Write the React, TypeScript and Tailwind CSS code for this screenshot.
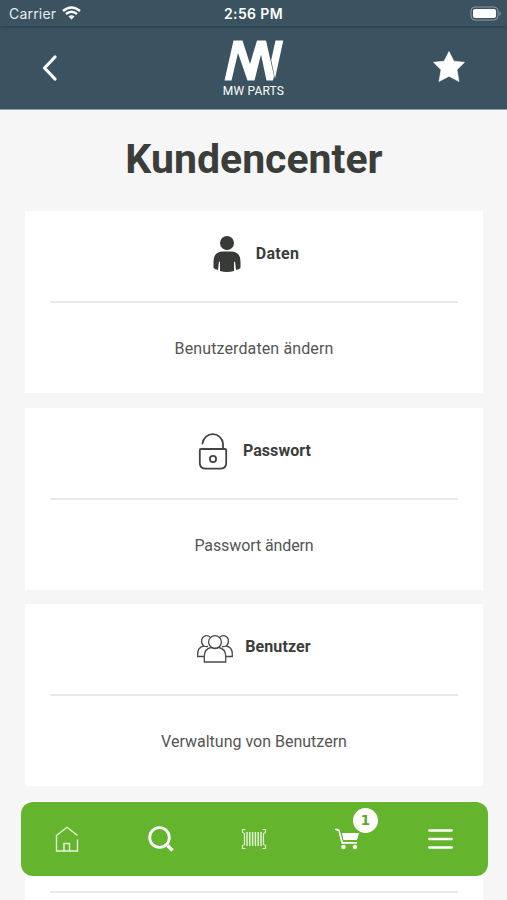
import type { ReactNode } from "react";

interface CardProps {
  title?: string;
  text?: string;
  icon?: ReactNode;
  titleClass?: string;
  textClass?: string;
}

function Card({ title, text, icon, titleClass = "", textClass = "" }: CardProps) {
  return (
    <section className="h-[182px] shrink-0 bg-white px-[25px]">
      <div className="flex h-[92px] items-center justify-center border-b-2 border-[#e9e9e9] pb-[4px]">
        {icon}
        <h2 className={`text-base font-bold whitespace-nowrap ${titleClass}`}>{title}</h2>
      </div>
      <p className={`pt-[34px] text-center text-base leading-6 text-[#555] ${textClass}`}>{text}</p>
    </section>
  );
}

function PersonIcon() {
  return (
    <svg className="mr-[15px] ml-[4px] h-[38px] w-[28px]" viewBox="0 0 28 38" fill="#383a38">
      <circle cx="14" cy="8" r="7" />
      <path d="M.5 29.500V27Q.5 16.500 10 16.500H18Q27.500 16.500 27.500 27V33Q26 34.500 23 35L22 26.500L21 27V36Q14 38 7 36V27L6 26.500L5 35Q2 34.500 .5 33Z" />
    </svg>
  );
}

function LockIcon() {
  return (
    <svg className="mr-[15px] ml-[1px] h-[38px] w-[30px]" viewBox="0 0 30 38" fill="none" stroke="#444" strokeWidth="1.800" strokeLinecap="round">
      <path d="M4.500 11.500A10.300 10.300 0 0 1 25 11.500V17" />
      <path d="M3 17H27Q28.200 17 28.200 18.200V31Q28.200 36.700 22 36.700H8Q1.800 36.700 1.800 31V18.200Q1.800 17 3 17Z" />
      <circle cx="15" cy="27" r="3.100" />
    </svg>
  );
}

function UsersIcon() {
  return (
    <svg className="mt-[4px] mr-[12px] h-[30px] w-[36px]" viewBox="0 0 36 30" fill="none" stroke="#4a4a4a" strokeWidth="1.300">
      <circle cx="18" cy="8" r="6.400" />
      <path d="M7.300 28V22Q7.300 15 14 13.500Q18 15.500 22 13.500Q28.700 15 28.700 22V28Z" />
      <path d="M13 3A5 5 0 0 0 4.700 5.500Q4 9.500 7 12Q.7 13 .7 20V22.500H7M23 3A5 5 0 0 1 31.300 5.500Q32 9.500 29 12Q35.300 13 35.300 20V22.500H29M7 12Q9 13 11 12.500M29 12Q27 13 25 12.500" />
    </svg>
  );
}

function Header() {
  return (
    <header className="h-[110px] border-b border-[#91a0a9] bg-[#3b5360] text-white">
      <div className="grid h-[26px] grid-cols-3 items-center shadow-[0_1px_3px_#263d4a]">
        <div className="flex items-center gap-[6px] pt-px pl-[9px] font-['Inter',sans-serif] text-[14px] tracking-[.2px] text-[#e6ebed]">
          Carrier
          <svg className="mb-[2px] h-[14px] w-[19px]" viewBox="0 0 19 14" fill="none" stroke="#fff" strokeWidth="2.500">
            <path d="M1 5Q9.500-2 18 5M4 8Q9.500 3.500 15 8" />
            <path d="M6.500 10.500Q9.500 8 12.500 10.500L9.500 13.500Z" fill="#fff" stroke="none" />
          </svg>
        </div>
        <time className="pt-px text-center font-['Inter',sans-serif] text-[14px] font-semibold tracking-[.4px] whitespace-nowrap">2:56 PM</time>
        <div className="flex justify-end pr-[6px]">
          <svg className="h-[15px] w-[31px]" viewBox="0 0 31 15">
            <rect x="1" y="1" width="27" height="13" rx="4" fill="none" stroke="#8d9ba3" />
            <rect x="3" y="3" width="23" height="9" rx="2" fill="#fff" />
            <path d="M29.500 5Q32 7.500 29.500 10Z" fill="#8d9ba3" />
          </svg>
        </div>
      </div>
      <div className="grid h-[83px] grid-cols-[1fr_66px_1fr]">
        <button className="flex items-center pl-[42px]" aria-label="Zurück">
          <svg className="h-[28px] w-[16px]" viewBox="0 0 16 28" fill="none" stroke="white" strokeWidth="3.200" strokeLinecap="round" strokeLinejoin="round">
            <path d="M13 3L2.500 14L13 25" />
          </svg>
        </button>
        <div className="flex flex-col items-center pt-[14px]">
          <svg className="h-[41px] w-[60px]" viewBox="0 0 60 41" fill="white">
            <path d="M.5 40.500L9.500 .5H18.500L26 24L33 .5H42L50 36L49 40.500H42.500L37 14.500L30.500 40.500H23.500L14 13L7.500 40.500Z" />
            <path d="M47.200 20L51.500 .5H59.300L51 38.500Z" />
          </svg>
          <span className="mt-[2px] font-['Roboto',sans-serif] text-[12px] leading-4 tracking-[.2px] whitespace-nowrap">MW PARTS</span>
        </div>
        <button className="flex items-center justify-end pr-[42px]" aria-label="Favoriten">
          <svg className="mb-[2px] h-[31px] w-[32px]" viewBox="0 0 32 31" fill="white" stroke="white" strokeWidth=".6" strokeLinejoin="round">
            <path d="M16 .5L20.900 10.200L31.500 11.300L24 18.700L26 30.500L16 25.300L6 30.500L8 18.700L.5 11.300L11.100 10.200Z" />
          </svg>
        </button>
      </div>
    </header>
  );
}

function BottomNav() {
  return (
    <nav className="absolute top-[802px] left-[20.500px] grid h-[74px] w-[467px] grid-cols-5 place-items-center rounded-[12px] bg-[#64b42d] text-white">
      <svg className="h-[26px] w-[24px]" viewBox="0 0 24 26" fill="none" stroke="#e8f5dd" strokeWidth="1.400">
        <path d="M22.500 13.500V25H1.500V9.500L12 1.300L22.500 9.500M9 25V17.500H14.500V25" />
      </svg>
      <svg className="h-[26px] w-[26px]" viewBox="0 0 26 26" fill="none" stroke="white" strokeWidth="2.800">
        <circle cx="11.500" cy="11.500" r="9.800" />
        <path d="M19.500 19.500L24.500 24.500" strokeWidth="3.500" />
      </svg>
      <svg className="h-[22px] w-[26px]" viewBox="0 0 26 22" fill="none" stroke="#dff1d1">
        <path d="M4.500 1.500H1.500V4.500L3.500 5.500V16.500L1.500 17.500V20.500H4.500M21.500 1.500H24.500V4.500L22.500 5.500V16.500L24.500 17.500V20.500H21.500" strokeWidth="1.200" />
        <path d="M6 4V18M8.800 4V18M11.600 4V18M14.400 4V18M17.200 4V18M20 4V18" strokeWidth="1.500" />
      </svg>
      <div className="relative">
        <svg className="h-[22px] w-[25px]" viewBox="0 0 25 22" fill="white">
          <path d="M0 1.200Q.3 .5 1 .6L4.500 1.500L8 14H22V15.800H6.500L3.300 3.200L0 2ZM7 5H24L22 12H8.500Z" />
          <circle cx="8.500" cy="19" r="2.200" />
          <circle cx="20" cy="19" r="2.200" />
        </svg>
        <span className="absolute -top-[20px] left-[18px] flex size-[25px] items-center justify-center rounded-full bg-white font-['DejaVu_Sans',sans-serif] text-[14px] font-bold text-[#64a72e]">1</span>
      </div>
      <svg className="h-[20px] w-[25px]" viewBox="0 0 25 20" stroke="white" strokeWidth="2.300" strokeLinecap="round">
        <path d="M1.200 1.500H23.800M1.200 10H23.800M1.200 18.500H23.800" />
      </svg>
    </nav>
  );
}

export default function App() {
  return (
    <div className="relative h-[900px] w-[507px] overflow-hidden bg-[#f6f6f6] font-['Roboto',sans-serif] text-[#3b3d3b]">
      <Header />
      <h1 className="pt-[22px] pl-px text-center text-[41px] leading-[54px] font-bold">Kundencenter</h1>
      <main className="mt-[25px] flex flex-col gap-[14.500px] pr-[24px] pl-[25px]">
        <Card
          title="Daten"
          text="Benutzerdaten ändern"
          icon={<PersonIcon />}
          titleClass="tracking-[.3px]"
          textClass="tracking-[.12px]"
        />
        <Card title="Passwort" text="Passwort ändern" icon={<LockIcon />} titleClass="tracking-[.05px]" textClass="tracking-[-.1px]" />
        <Card title="Benutzer" text="Verwaltung von Benutzern" icon={<UsersIcon />} titleClass="tracking-[.1px]" />
        <Card />
      </main>
      <BottomNav />
    </div>
  );
}
